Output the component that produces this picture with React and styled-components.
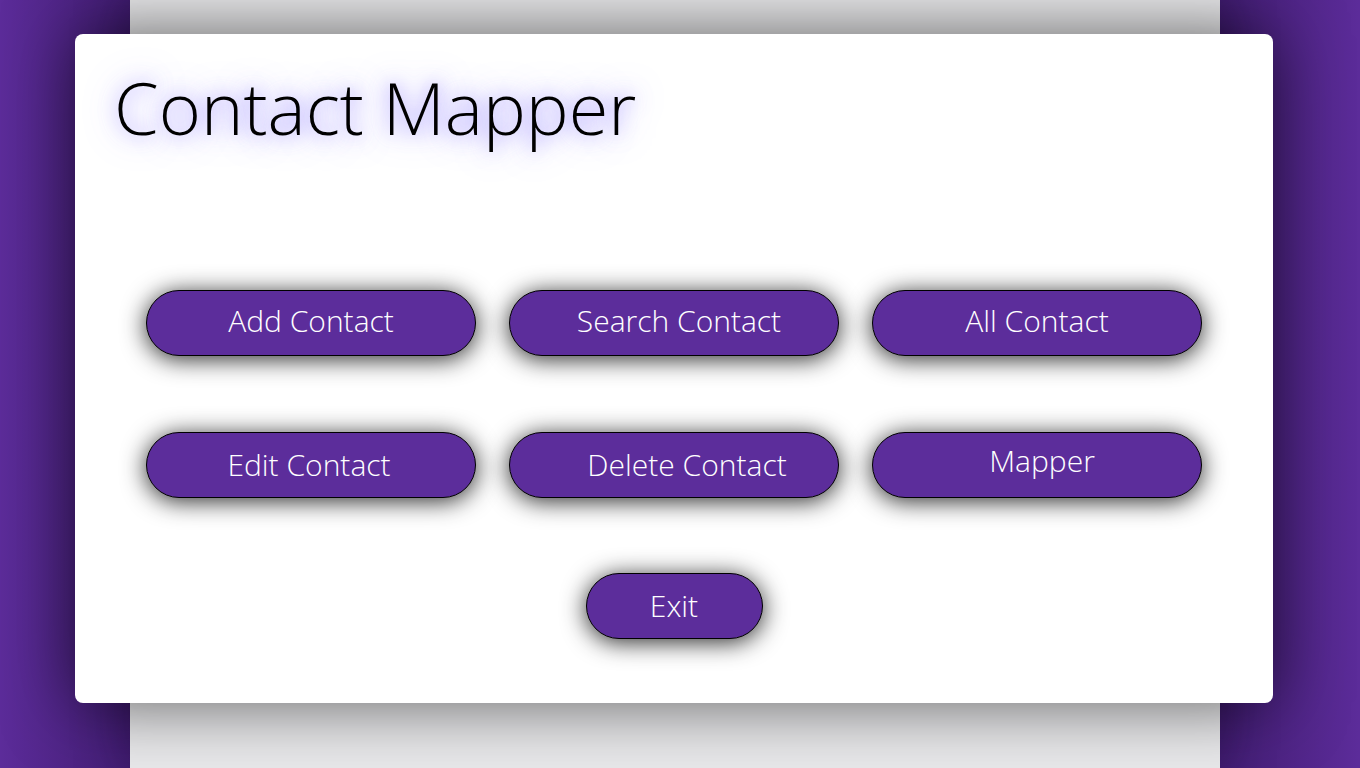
import styled, { createGlobalStyle } from 'styled-components';

const GlobalStyle = createGlobalStyle`
    html, body {
        margin: 0;
        padding: 0;
        height: 100%;
    }
    body {
        background: #5c2c9a;
        font-family: 'Open Sans', 'Noto Sans', sans-serif;
        overflow: hidden;
    }
`;

/* dx / dy nudge the label inside the pill, the original has a few off-centre */
const buttons = [
    { label: 'Add Contact' },
    { label: 'Search Contact', dx: 5 },
    { label: 'All Contact' },
    { label: 'Edit Contact', dx: -2, dy: 2 },
    { label: 'Delete Contact', dx: 13, dy: 2 },
    { label: 'Mapper', dx: 5, dy: -2 },
];

const App = () => {
    return (
        <>
            <GlobalStyle />
            <Page>
                <Column>
                    <Card>
                        <Title>Contact Mapper</Title>
                        <ButtonGrid>
                            {buttons.map((b) => (
                                <MenuButton key={b.label} $dx={b.dx} $dy={b.dy}>
                                    {b.label}
                                </MenuButton>
                            ))}
                        </ButtonGrid>
                        <ExitRow>
                            <MenuButton $small $dy={1.5}>Exit</MenuButton>
                        </ExitRow>
                    </Card>
                </Column>
            </Page>
        </>
    );
}

export default App;

/* page background + centre column */
const Page = styled.div`
    display: flex;
    height: 100vh;
    padding-left: 130px;
    box-sizing: border-box;
    background: linear-gradient(to right, rgba(30, 8, 60, 0) 0px, rgba(30, 8, 60, 0.4) 130px, rgba(30, 8, 60, 0) 360px,
        rgba(30, 8, 60, 0) 1000px, rgba(30, 8, 60, 0.4) 1220px, rgba(30, 8, 60, 0) 1360px);
`;

const Column = styled.div`
    width: 1090px;
    height: 100%;
    background: #e9e9eb;
    box-shadow: 0 0 50px rgba(20, 0, 40, 0.35);
    display: flex;
    padding-top: 34px;
    box-sizing: border-box;
`;

const Card = styled.div`
    flex: none;
    margin-left: -55px;
    width: 1198px;
    height: 669px;
    box-sizing: border-box;
    background: #ffffff;
    border-radius: 8px;
    box-shadow: 0 0 70px rgba(0, 0, 0, 0.6);
    padding: 23px 71px 0 39px;
    display: flex;
    flex-direction: column;
`;

const Title = styled.h1`
    margin: 0;
    font-family: 'Open Sans', sans-serif;
    font-weight: 300;
    font-size: 72px;
    line-height: 101px;
    color: #000;
    text-shadow: 0 0 18px rgba(115, 95, 255, 0.55), 0 0 32px rgba(120, 100, 255, 0.5);
`;

const ButtonGrid = styled.div`
    margin: 132px 0 0 32px;
    display: grid;
    grid-template-columns: repeat(3, 330px);
    column-gap: 33px;
    row-gap: 76px;
`;

const ExitRow = styled.div`
    margin: 75px 0 0 32px;
    display: flex;
    justify-content: center;
    width: 1056px;
`;

const MenuButton = styled.button`
    width: ${(p) => (p.$small ? '177px' : '330px')};
    height: 66px;
    box-sizing: border-box;
    border: 1px solid #000;
    border-radius: 33px;
    background: #5c2d9b;
    color: #fff;
    font-family: 'Open Sans', sans-serif;
    font-weight: 300;
    font-size: 30px;
    padding-left: ${(p) => Math.max(0, (p.$dx || 0) * 2)}px;
    padding-right: ${(p) => Math.max(0, -(p.$dx || 0) * 2)}px;
    padding-top: ${(p) => Math.max(0, (p.$dy || 0) * 2)}px;
    padding-bottom: ${(p) => 5 + Math.max(0, -(p.$dy || 0) * 2)}px;
    box-shadow: 0 3px 24px rgba(0, 0, 0, 0.85);
    cursor: pointer;
`;
